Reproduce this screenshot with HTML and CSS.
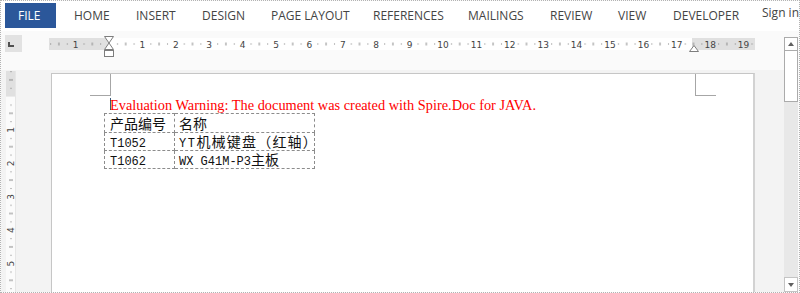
FILE: index.html
```html
<!DOCTYPE html>
<html lang="zh">
<head>
<meta charset="utf-8">
<title>Document</title>
<link rel="stylesheet" href="styles.css">
</head>
<body>
<div class="app">
  <div class="ribbon">
    <div class="file-tab">FILE</div>
    <nav class="tabs">
      <span class="tab">HOME</span>
      <span class="tab">INSERT</span>
      <span class="tab">DESIGN</span>
      <span class="tab">PAGE LAYOUT</span>
      <span class="tab">REFERENCES</span>
      <span class="tab">MAILINGS</span>
      <span class="tab">REVIEW</span>
      <span class="tab">VIEW</span>
      <span class="tab">DEVELOPER</span>
    </nav>
    <span class="signin">Sign in</span>
  </div>
  <div class="main">
    <div class="workspace">
      <div class="hruler-row">
        <div class="tab-selector"><span class="tab-stop"></span></div>
        <svg class="hruler" width="706" height="24" viewBox="0 0 706 24">
          <defs>
            <pattern id="hp" x="60" y="0" width="33.4" height="24" patternUnits="userSpaceOnUse">
              <rect x="8" y="8.5" width="1" height="1" fill="#7a7a7a"/>
              <rect x="16.2" y="7.5" width="1" height="3" fill="#8a8a8a"/>
              <rect x="24.6" y="8.5" width="1" height="1" fill="#7a7a7a"/>
            </pattern>
          </defs>
          <rect x="0" y="3" width="60" height="12" fill="#e0e0e0"/>
          <rect x="60" y="3" width="583" height="12" fill="#ffffff"/>
          <rect x="643" y="3" width="63" height="12" fill="#e0e0e0"/>
          <rect x="0" y="3" width="706" height="12" fill="url(#hp)"/>
          <g class="rnum" text-anchor="middle">
            <text x="26.6" y="12.6">1</text>
            <text x="93.4" y="12.6">1</text>
            <text x="126.8" y="12.6">2</text>
            <text x="160.2" y="12.6">3</text>
            <text x="193.6" y="12.6">4</text>
            <text x="227" y="12.6">5</text>
            <text x="260.4" y="12.6">6</text>
            <text x="293.8" y="12.6">7</text>
            <text x="327.2" y="12.6">8</text>
            <text x="360.6" y="12.6">9</text>
            <text x="394" y="12.6">10</text>
            <text x="427.4" y="12.6">11</text>
            <text x="460.8" y="12.6">12</text>
            <text x="494.2" y="12.6">13</text>
            <text x="527.6" y="12.6">14</text>
            <text x="561" y="12.6">15</text>
            <text x="594.4" y="12.6">16</text>
            <text x="627.8" y="12.6">17</text>
            <text x="661.2" y="12.6">18</text>
            <text x="694.6" y="12.6">19</text>
          </g>
          <g fill="#ffffff" stroke="#7d7d7d" stroke-width="1">
            <polygon points="55.5,1.5 64.5,1.5 60,8"/>
            <polygon points="60,8 55.5,14.5 64.5,14.5"/>
            <rect x="55.5" y="15.5" width="9" height="6"/>
            <polygon points="645,10.5 649.5,16.5 640.5,16.5"/>
          </g>
        </svg>
      </div>
      <div class="canvas">
        <svg class="vruler" width="10" height="222" viewBox="0 0 10 222">
          <defs>
            <pattern id="vp" x="0" y="25.6" width="10" height="33.4" patternUnits="userSpaceOnUse">
              <rect x="4.5" y="8" width="1" height="1" fill="#7a7a7a"/>
              <rect x="3" y="16.2" width="4" height="1" fill="#8a8a8a"/>
              <rect x="4.5" y="24.6" width="1" height="1" fill="#7a7a7a"/>
            </pattern>
          </defs>
          <rect x="0" y="0" width="10" height="222" fill="#fbfbfb"/>
          <rect x="0" y="0" width="10" height="25.6" fill="#e0e0e0"/>
          <rect x="0" y="0" width="10" height="222" fill="url(#vp)"/>
          <rect x="9" y="0" width="1" height="222" fill="#e6e6e6"/>
          <g class="rnum" text-anchor="middle">
            <text transform="translate(8.2,59) rotate(-90)">1</text>
            <text transform="translate(8.2,92.4) rotate(-90)">2</text>
            <text transform="translate(8.2,125.8) rotate(-90)">3</text>
            <text transform="translate(8.2,159.2) rotate(-90)">4</text>
            <text transform="translate(8.2,192.6) rotate(-90)">5</text>
          </g>
        </svg>
        <div class="page">
          <div class="page-head">
            <span class="mark mark-l"></span>
            <span class="mark mark-r"></span>
          </div>
          <p class="warning"><span class="caret"></span>Evaluation Warning: The document was created with Spire.Doc for JAVA.</p>
          <table class="doc-table">
            <tr class="row-head">
              <td>产品编号</td>
              <td>名称</td>
            </tr>
            <tr class="row-body">
              <td><span class="lat">T1052</span></td>
              <td><span class="lat lat-wide">YT</span><span class="wide">机械键盘（红轴）</span></td>
            </tr>
            <tr class="row-body">
              <td><span class="lat">T1062</span></td>
              <td><span class="lat">WX G41M-P3</span>主板</td>
            </tr>
          </table>
        </div>
      </div>
    </div>
    <div class="scrollbar">
      <div class="sb-btn sb-up"><span class="arrow-up"></span></div>
      <div class="sb-thumb"></div>
      <div class="sb-track"></div>
      <div class="sb-btn sb-down"><span class="arrow-down"></span></div>
    </div>
  </div>
</div>
</body>
</html>
```

FILE: styles.css
```css
* { box-sizing: border-box; }
html, body { margin: 0; padding: 0; background: #ffffff; }
body { font-family: "Open Sans", "Liberation Sans", sans-serif; }

.app {
  width: 800px;
  height: 293px;
  border: 1px dotted #b3b3b3;
  display: flex;
  flex-direction: column;
  overflow: hidden;
  background: #fafafa;
}

/* ribbon */
.ribbon {
  height: 30px;
  flex: none;
  display: flex;
  align-items: flex-start;
  background: #ffffff;
  overflow: hidden;
}
.file-tab {
  margin: 2px 0 0 4px;
  width: 52px;
  height: 25px;
  background: #2b579a;
  color: #ffffff;
  font-size: 12px;
  line-height: 16px;
  padding: 5px 0 0 13px;
}
.tabs { display: flex; margin-left: 18px; flex: none; }
.tab {
  font-size: 12px;
  line-height: 16px;
  padding-top: 7px;
  color: #444444;
  white-space: nowrap;
}
.tab:nth-child(1) { width: 62px; }
.tab:nth-child(2) { width: 66px; }
.tab:nth-child(3) { width: 69px; }
.tab:nth-child(4) { width: 102px; }
.tab:nth-child(5) { width: 95px; }
.tab:nth-child(6) { width: 82px; }
.tab:nth-child(7) { width: 68px; }
.tab:nth-child(8) { width: 55px; }
.tab:nth-child(9) { width: 89px; }
.signin {
  font-size: 12px;
  line-height: 16px;
  padding-top: 4px;
  color: #444444;
  white-space: nowrap;
}

/* main */
.main {
  flex: 1;
  min-height: 0;
  display: flex;
  background: #fafafa;
}
.workspace {
  width: 783px;
  flex: none;
  display: flex;
  flex-direction: column;
}
.hruler-row {
  height: 39px;
  flex: none;
  display: flex;
  align-items: flex-start;
  background: #fafafa;
}
.tab-selector {
  margin: 4px 0 0 4px;
  width: 17px;
  height: 17px;
  background: #e2e2e2;
  display: flex;
  align-items: flex-start;
}
.tab-stop {
  margin: 7px 0 0 3px;
  width: 6px;
  height: 5px;
  border-left: 2px solid #505050;
  border-bottom: 2px solid #505050;
}
.hruler {
  display: block;
  margin: 4px 0 0 27px;
  overflow: visible;
}
.rnum text {
  font-family: "DejaVu Sans", sans-serif;
  font-size: 9px;
  fill: #444444;
}

.canvas {
  flex: 1;
  min-height: 0;
  display: flex;
  align-items: flex-start;
  background: #f3f3f3;
  overflow: hidden;
}
.vruler {
  display: block;
  flex: none;
  margin: 1px 0 0 5px;
}
.page {
  flex: none;
  align-self: stretch;
  width: 704px;
  margin: 3px 0 0 35px;
  background: #ffffff;
  border-top: 1px solid #c6c6c6;
  border-left: 1px solid #c6c6c6;
  border-right: 2px solid #d2d2d2;
}
.page-head {
  height: 22px;
  display: flex;
  justify-content: space-between;
  align-items: flex-start;
  padding: 0 37px 0 38px;
}
.mark {
  height: 22px;
  border-bottom: 1px solid #a6a6a6;
}
.mark-l { width: 21px; border-right: 1px solid #a6a6a6; }
.mark-r { width: 21px; border-left: 1px solid #a6a6a6; }

.warning {
  margin: 1px 0 0 58px;
  font-family: "Liberation Serif", serif;
  font-size: 14.35px;
  line-height: 16px;
  color: #ff0000;
  white-space: nowrap;
}
.caret {
  display: inline-block;
  width: 1px;
  height: 12px;
  margin-right: -1px;
  background: #3a5a7a;
}

.doc-table {
  margin-left: 52px;
  border-collapse: collapse;
  table-layout: fixed;
  width: 211px;
}
.doc-table td {
  border: 1px dashed #8c8c8c;
  padding: 0 0 0 5px;
  font-family: "Noto Sans CJK SC", sans-serif;
  font-size: 14px;
  line-height: 15px;
  color: #111111;
  white-space: nowrap;
  vertical-align: middle;
}
.doc-table td:nth-child(1) { width: 70px; }
.doc-table td:nth-child(2) { padding-left: 4px; }
.row-head td { height: 19px; }
.row-body td { height: 18px; }
.lat {
  font-family: "Liberation Mono", monospace;
  font-size: 12px;
  line-height: 12px;
}
.lat-wide { letter-spacing: 1.5px; }
.wide { letter-spacing: 1.2px; }

/* scrollbar */
.scrollbar {
  width: 14px;
  flex: none;
  margin-top: 6px;
  display: flex;
  flex-direction: column;
}
.sb-btn {
  flex: none;
  height: 14px;
  border: 1px solid #ababab;
  background: #ffffff;
  display: flex;
  align-items: center;
  justify-content: center;
}
.sb-down { height: 15px; border-color: #c4c4c4; }
.arrow-up {
  width: 0; height: 0;
  border-left: 3px solid transparent;
  border-right: 3px solid transparent;
  border-bottom: 4px solid #606060;
}
.arrow-down {
  width: 0; height: 0;
  border-left: 3px solid transparent;
  border-right: 3px solid transparent;
  border-top: 4px solid #606060;
}
.sb-thumb {
  flex: none;
  height: 51px;
  border: 1px solid #ababab;
  border-top: none;
  background: #ffffff;
}
.sb-track {
  flex: 1;
  background: #e8e8e8;
}
```
